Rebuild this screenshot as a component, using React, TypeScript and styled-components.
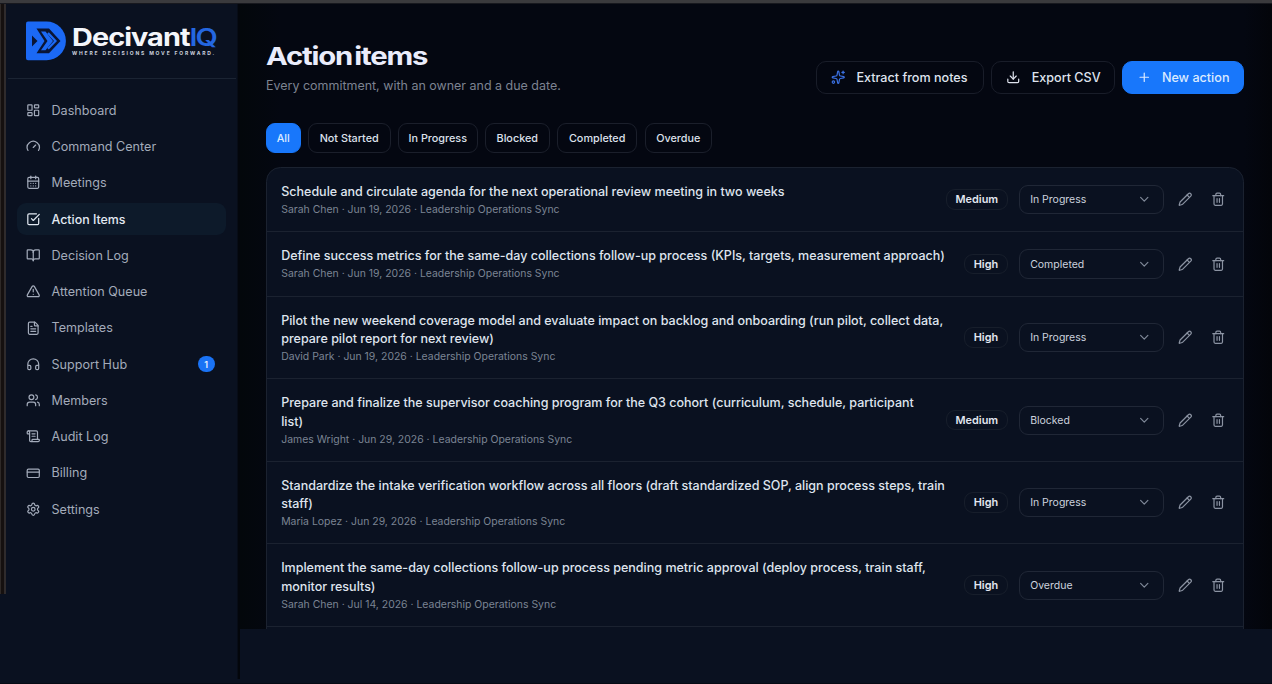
import React from 'react';
import styled, { createGlobalStyle, css } from 'styled-components';
import {
  BookOpen,
  CalendarDays,
  ChevronDown,
  CreditCard,
  Download,
  FileText,
  Gauge,
  Headphones,
  LayoutDashboard,
  Pencil,
  Plus,
  ScrollText,
  Settings,
  Sparkles,
  SquareCheckBig,
  Trash2,
  TriangleAlert,
  Users,
  type LucideIcon,
} from 'lucide-react';

const ICON = 14.5;

const GlobalStyle = createGlobalStyle`
  *, *::before, *::after { box-sizing: border-box; }
  body {
    margin: 0;
    background: #0a1120;
    color: #e4e8f4;
    font-family: Inter, "Liberation Sans", sans-serif;
    overflow: hidden;
  }
  button { font-family: inherit; color: inherit; cursor: pointer; margin: 0; }
  svg { flex: none; display: block; }
`;

const Window = styled.div`
  display: flex;
  flex-direction: column;
  width: 1272px;
  height: 684px;
  border-bottom: 1px solid #060a14;
  overflow: hidden;
`;

const TopEdge = styled.div`
  flex: none;
  height: 4px;
  background: linear-gradient(#3a3a3d 0 3px, #17181e 3px);
`;

const Columns = styled.div`
  flex: 1;
  min-height: 0;
  display: flex;
  align-items: flex-start;
`;

const LeftEdge = styled.div`
  flex: none;
  width: 6px;
  height: 590px;
  background: linear-gradient(90deg, #2e2927 0 1px, #15100f 1px 4px, #2f2b2c 4px 6px);
`;

const Sidebar = styled.aside`
  flex: none;
  width: 231px;
  height: 100%;
  background: #0a1120;
`;

const Divide = styled.div`
  flex: none;
  width: 3px;
  height: 675px;
  background: linear-gradient(90deg, #070c17 0 1px, #03060b 1px);
`;

const Brand = styled.div`
  display: flex;
  align-items: center;
  height: 75px;
  margin: 0 1px 0 2px;
  padding: 0 0 0 18px;
  border-bottom: 1px solid #1b2433;
`;

const BrandText = styled.div`
  display: flex;
  flex-direction: column;
  width: 146px;
  margin: 0 0 2px 5px;
`;

const Wordmark = styled.div`
  width: max-content;
  font-size: 24.4px;
  line-height: 26px;
  font-weight: 700;
  letter-spacing: -0.8px;
  color: #f4f6fb;
  transform: scaleX(1.183);
  transform-origin: left;
  white-space: nowrap;

  span { color: #2467e0; font-weight: 600; letter-spacing: -1.7px; }
`;

const Tagline = styled.div`
  font-size: 5px;
  line-height: 6px;
  font-weight: 700;
  letter-spacing: 1.82px;
  color: #ccd3df;
  white-space: nowrap;
`;

const Nav = styled.nav`
  display: flex;
  flex-direction: column;
  gap: 3.63px;
  padding: 14.9px 11px 0;
`;

const NavItem = styled.a<{ $active?: boolean }>`
  display: flex;
  align-items: center;
  gap: 11px;
  height: 32.65px;
  padding: 0 11.5px 0 9px;
  border-radius: 9px;
  font-size: 12.6px;
  color: #a3abba;
  ${(p) =>
    p.$active &&
    css`
      background: #0d1a2a;
      color: #e2e9f2;
      font-weight: 500;
      font-size: 12.4px;
    `}
`;

const NavCount = styled.span`
  display: grid;
  place-items: center;
  width: 16.5px;
  height: 16.5px;
  margin-left: auto;
  border-radius: 50%;
  background: #1a73f5;
  color: #e8f1ff;
  font-size: 9px;
  font-weight: 600;
`;

const Main = styled.main`
  flex: 1;
  min-width: 0;
  height: 625px;
  padding: 38px 28px 0 26px;
  overflow: hidden;
  background: linear-gradient(90deg, #03070b 0, #040711 40px, #040711 1004px, #03050a 1032px);
`;

const Header = styled.header`
  display: flex;
  justify-content: space-between;
  height: 81px;
`;

const Heading = styled.h1`
  width: max-content;
  margin: 0;
  font-size: 24.6px;
  line-height: 29px;
  font-weight: 700;
  letter-spacing: -1px;
  word-spacing: -3px;
  color: #eaecfb;
  transform: scaleX(1.19);
  transform-origin: left;
`;

const Subheading = styled.p`
  margin: 6px 0 0;
  font-size: 12.48px;
  line-height: 18px;
  color: #7d8391;
`;

const Actions = styled.div`
  display: flex;
  align-items: flex-start;
  gap: 7.25px;
  padding-top: 19.4px;
`;

const ActionButton = styled.button<{ $width: number; $primary?: boolean }>`
  display: flex;
  align-items: center;
  gap: 10.9px;
  width: ${(p) => p.$width}px;
  height: 32.6px;
  padding: 0 14.5px 1px;
  border: 1px solid #191d29;
  border-radius: 10px;
  background: transparent;
  color: #dfe3ee;
  font-size: 12.6px;
  font-weight: 500;
  white-space: nowrap;
  ${(p) =>
    p.$primary &&
    css`
      padding-left: 13.5px;
      border-color: #1877fb;
      background: #1877fb;
      color: #dbeaff;
    `}
`;

const Filters = styled.div`
  display: flex;
  gap: 7.2px;
`;

const Chip = styled.button<{ $width: number; $active?: boolean }>`
  width: ${(p) => p.$width}px;
  height: 29.5px;
  padding: 1px 0 0;
  border: 1px solid #1b1f2b;
  border-radius: 9px;
  background: transparent;
  color: #dde1ec;
  font-size: 10.8px;
  font-weight: 500;
  white-space: nowrap;
  ${(p) =>
    p.$active &&
    css`
      border-color: #1877fb;
      background: #1877fb;
      color: #dbeaff;
    `}
`;

const List = styled.ul`
  min-height: 500px;
  margin: 14.5px 0 0;
  padding: 0;
  list-style: none;
  border: 1px solid #1b2230;
  border-radius: 14.5px;
  background: #0a1120;
`;

const Item = styled.li<{ $lines: number }>`
  display: flex;
  align-items: center;
  gap: 10.9px;
  height: ${(p) => (p.$lines === 1 ? 64.4 : 82.55)}px;
  padding: 0 14px 0 14.2px;
  border-bottom: 1px solid #1b2230;
`;

const ItemText = styled.div`
  flex: 1;
  min-width: 0;
  padding-top: 1.2px;
`;

const ItemTitle = styled.div`
  font-size: 12.52px;
  line-height: 18.15px;
  font-weight: 500;
  color: #dfe4ee;
`;

const ItemMeta = styled.div`
  margin-top: 1.8px;
  font-size: 10.45px;
  line-height: 14.5px;
  color: #7b8493;
`;

const Priority = styled.span`
  height: 20.5px;
  padding: 0 8.6px;
  border: 1px solid #171e2b;
  border-radius: 9px;
  font-size: 10.9px;
  line-height: 18.5px;
  font-weight: 600;
  color: #e2e6f0;
`;

const Status = styled.button`
  display: flex;
  align-items: center;
  justify-content: space-between;
  width: 145px;
  height: 29.2px;
  padding: 0 10.9px 0 10.5px;
  border: 1px solid #202736;
  border-radius: 9px;
  background: transparent;
  color: #ccd2de;
  font-size: 10.5px;

  svg { color: #7f8898; }
`;

const IconButton = styled.button`
  display: grid;
  place-items: center;
  width: 21.8px;
  height: 29px;
  padding: 0;
  border: 0;
  background: transparent;
  color: #8b93a2;
`;

type NavEntry = { label: string; icon: LucideIcon; active?: boolean; count?: number };

const NAV: NavEntry[] = [
  { label: 'Dashboard', icon: LayoutDashboard },
  { label: 'Command Center', icon: Gauge },
  { label: 'Meetings', icon: CalendarDays },
  { label: 'Action Items', icon: SquareCheckBig, active: true },
  { label: 'Decision Log', icon: BookOpen },
  { label: 'Attention Queue', icon: TriangleAlert },
  { label: 'Templates', icon: FileText },
  { label: 'Support Hub', icon: Headphones, count: 1 },
  { label: 'Members', icon: Users },
  { label: 'Audit Log', icon: ScrollText },
  { label: 'Billing', icon: CreditCard },
  { label: 'Settings', icon: Settings },
];

const FILTERS = [
  { label: 'All', width: 34.5 },
  { label: 'Not Started', width: 83 },
  { label: 'In Progress', width: 79.8 },
  { label: 'Blocked', width: 64.8 },
  { label: 'Completed', width: 80.6 },
  { label: 'Overdue', width: 67.3 },
];

const SYNC = 'Leadership Operations Sync';

const ITEMS = [
  { title: 'Schedule and circulate agenda for the next operational review meeting in two weeks', owner: 'Sarah Chen', due: 'Jun 19, 2026', priority: 'Medium', status: 'In Progress', lines: 1 },
  { title: 'Define success metrics for the same-day collections follow-up process (KPIs, targets, measurement approach)', owner: 'Sarah Chen', due: 'Jun 19, 2026', priority: 'High', status: 'Completed', lines: 1 },
  { title: 'Pilot the new weekend coverage model and evaluate impact on backlog and onboarding (run pilot, collect data, prepare pilot report for next review)', owner: 'David Park', due: 'Jun 19, 2026', priority: 'High', status: 'In Progress', lines: 2 },
  { title: 'Prepare and finalize the supervisor coaching program for the Q3 cohort (curriculum, schedule, participant list)', owner: 'James Wright', due: 'Jun 29, 2026', priority: 'Medium', status: 'Blocked', lines: 2 },
  { title: 'Standardize the intake verification workflow across all floors (draft standardized SOP, align process steps, train staff)', owner: 'Maria Lopez', due: 'Jun 29, 2026', priority: 'High', status: 'In Progress', lines: 2 },
  { title: 'Implement the same-day collections follow-up process pending metric approval (deploy process, train staff, monitor results)', owner: 'Sarah Chen', due: 'Jul 14, 2026', priority: 'High', status: 'Overdue', lines: 2 },
];

function Logo() {
  return (
    <svg width="41" height="40" viewBox="0 0 41 40">
      <path d="M2 0.5H20.5A19.4 19.4 0 0 1 20.5 39.3H2Q0 39.3 0 37.3V2.500Q0 0.500 2 0.500Z" fill="#1b69f5" />
      <path d="M10.500 7.500H23L34.500 19.900L23 32.300H10.500L18.500 19.900Z" fill="#0a1534" />
      <path d="M15 10.500H19.500L27 19.900L19.500 29.300H15L21.500 19.900Z" fill="#1b69f5" />
      <path d="M22 12L29.500 19.900L22 27.800" fill="none" stroke="#1b69f5" strokeWidth="2.200" />
      <path d="M6 14.400L11.500 19.900L6 25.400Z" fill="#0a1534" />
    </svg>
  );
}

export default function App() {
  return (
    <Window>
      <GlobalStyle />
      <TopEdge />
      <Columns>
        <LeftEdge />
        <Sidebar>
          <Brand>
            <Logo />
            <BrandText>
              <Wordmark>Decivant<span>IQ</span></Wordmark>
              <Tagline>WHERE DECISIONS MOVE FORWARD.</Tagline>
            </BrandText>
          </Brand>
          <Nav>
            {NAV.map(({ label, icon: Icon, active, count }) => (
              <NavItem key={label} $active={active}>
                <Icon size={ICON} />
                {label}
                {count && <NavCount>{count}</NavCount>}
              </NavItem>
            ))}
          </Nav>
        </Sidebar>
        <Divide />
        <Main>
          <Header>
            <div>
              <Heading>Action items</Heading>
              <Subheading>Every commitment, with an owner and a due date.</Subheading>
            </div>
            <Actions>
              <ActionButton $width={168}>
                <Sparkles size={ICON} color="#3a6fe0" />
                Extract from notes
              </ActionButton>
              <ActionButton $width={124}>
                <Download size={ICON} />
                Export CSV
              </ActionButton>
              <ActionButton $width={122} $primary>
                <Plus size={ICON} />
                New action
              </ActionButton>
            </Actions>
          </Header>
          <Filters>
            {FILTERS.map((f, i) => (
              <Chip key={f.label} $width={f.width} $active={i === 0}>{f.label}</Chip>
            ))}
          </Filters>
          <List>
            {ITEMS.map((item) => (
              <Item key={item.title} $lines={item.lines}>
                <ItemText>
                  <ItemTitle>{item.title}</ItemTitle>
                  <ItemMeta>{item.owner} · {item.due} · {SYNC}</ItemMeta>
                </ItemText>
                <Priority>{item.priority}</Priority>
                <Status>
                  {item.status}
                  <ChevronDown size={ICON} />
                </Status>
                <IconButton aria-label="Edit"><Pencil size={ICON} /></IconButton>
                <IconButton aria-label="Delete"><Trash2 size={ICON} /></IconButton>
              </Item>
            ))}
          </List>
        </Main>
      </Columns>
    </Window>
  );
}
